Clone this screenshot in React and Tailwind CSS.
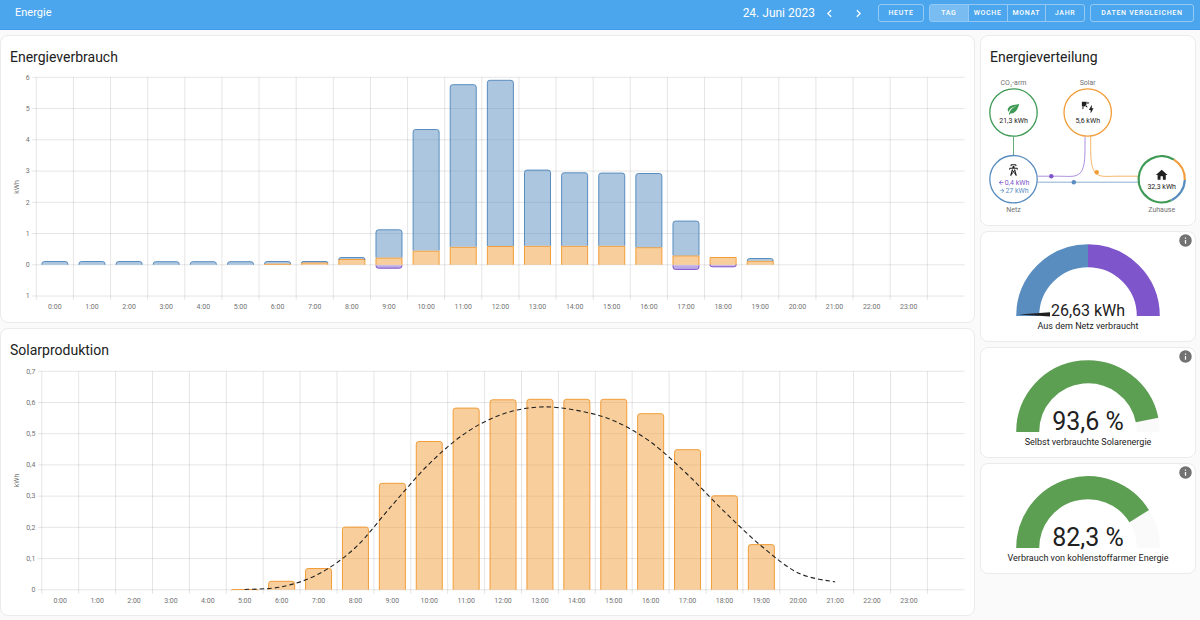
import React from "react";

const ICONS = {
  leaf: "M17,8C8,10 5.9,16.17 3.82,21.34L5.71,22L6.66,19.7C7.14,19.87 7.64,20 8,20C19,20 22,3 22,3C21,5 14,5.25 9,6.25C4,7.25 2,11.5 2,13.5C2,15.5 3.75,17.25 3.75,17.25C7,8 17,8 17,8Z",
  home: "M10,20V14H14V20H19V12H22L12,3L2,12H5V20H10Z",
  tower:
    "M8.28,5.45L6.5,4.55L7.76,2H16.23L17.5,4.55L15.72,5.44L15,4H9L8.28,5.45M18.62,8H14.09L13.3,5H10.7L9.91,8H5.38L4.1,10.55L5.89,11.44L6.62,10H17.38L18.1,11.45L19.89,10.56L18.62,8M17.77,22H15.7L15.46,21.1L12,15.9L8.53,21.1L8.3,22H6.23L9.12,11H11.19L10.83,12.35L12,14.1L13.16,12.35L12.81,11H14.88L17.77,22M11.4,15L10.5,13.65L9.32,18.13L11.4,15M14.68,18.12L13.5,13.64L12.6,15L14.68,18.12Z",
  solar:
    "M11.45,2V5.55L15,3.77L11.45,2M10.45,8L8,10.46L11.75,11.71L10.45,8M2,11.45L3.77,15L5.55,11.45H2M10,2H2V10C2.57,10.17 3.17,10.25 3.77,10.25C7.35,10.26 10.26,7.35 10.27,3.75C10.26,3.16 10.17,2.57 10,2M17,22V16H14L19,7V13H22L17,22Z",
  info: "M13,9H11V7H13M13,17H11V11H13M12,2A10,10 0 0,0 2,12A10,10 0 0,0 12,22A10,10 0 0,0 22,12A10,10 0 0,0 12,2Z",
  left: "M15.41,16.58L10.83,12L15.41,7.41L14,6L8,12L14,18L15.41,16.58Z",
  right: "M8.59,16.58L13.17,12L8.59,7.41L10,6L16,12L10,18L8.59,16.58Z",
  arrowLeft: "M20,11V13H8L13.5,18.5L12.08,19.92L4.16,12L12.08,4.08L13.5,5.5L8,11H20Z",
  arrowRight: "M4,11V13H16L10.5,18.5L11.92,19.92L19.84,12L11.92,4.08L10.5,5.5L16,11H4Z",
};

const BLUE = "#5a8dbf";
const ORANGE = "#f29d39";
const PURPLE = "#7e55cb";
const GREEN = "#3f9a56";

const HOURS = Array.from({ length: 24 }, (_, h) => h);

function Card({ children, className = "" }) {
  return (
    <section className={`relative rounded-lg border border-[#ebebeb] bg-white ${className}`}>
      {children}
    </section>
  );
}

function CardTitle({ children }) {
  return <h2 className="px-[9px] pt-[11px] pb-px text-sm leading-5 text-[#212121]">{children}</h2>;
}

function Grid({ x0, step, right, yTop, yBottom, rows, labelX }) {
  return (
    <g>
      <g stroke="#000" strokeOpacity="0.1" strokeWidth="1">
        {Array.from({ length: 25 }, (_, i) => (
          <line key={i} x1={x0 + i * step} x2={x0 + i * step} y1={yTop} y2={yBottom + 4} />
        ))}
        {rows.map((r) => (
          <line key={r.y} x1={x0 - 4} x2={right} y1={r.y} y2={r.y} />
        ))}
      </g>
      <g className="fill-[#727272] text-[7px]">
        {rows.map((r) => (
          <text key={r.y} x={labelX} y={r.y + 2.3} textAnchor="end">
            {r.label}
          </text>
        ))}
        {HOURS.map((h) => (
          <text key={h} x={x0 + (h + 0.5) * step} y={yBottom + 13} textAnchor="middle">
            {h}:00
          </text>
        ))}
      </g>
    </g>
  );
}

// Bar outline that leaves its base open, with the far corners rounded.
function Bar({ x, w = 26, base, end, color, round = true }) {
  const dir = end < base ? 1 : -1;
  const r = round ? Math.min(2.5, Math.abs(base - end)) : 0;
  const e = end + dir * 0.5;
  const d = `M${x},${base}V${e + dir * r}Q${x},${e} ${x + r},${e}H${x + w - r}Q${x + w},${e} ${x + w},${e + dir * r}V${base}`;
  return <path d={d} fill={color} fillOpacity="0.5" stroke={color} strokeWidth="1" />;
}

// [top of the stack, top of the solar share, bottom of the exported share]
const USAGE = [
  [261], [261], [261], [261.2], [261.2], [261.2],
  [261, 263.6], [261, 262.4], [257, 259], [229.3, 257.5, 268.2],
  [129, 250.6], [84.2, 246.8], [79.8, 246], [169.6, 245.8], [172.3, 245.8],
  [172.6, 245.8], [173, 247.2], [220.6, 255.4, 269.4], [257, 257, 266.8], [258, 260.8],
];

function UsageChart() {
  const x0 = 36.3;
  const step = 37.125;
  const zero = 264.8;
  const rows = [6, 5, 4, 3, 2, 1, 0, -1].map((v) => ({ y: zero - v * 31.25, label: String(Math.abs(v)) }));
  return (
    <svg viewBox="1 68 973 254" className="block w-full" role="img" aria-label="Energieverbrauch pro Stunde">
      <Grid x0={x0} step={step} right={964.5} yTop={77.3} yBottom={296.1} rows={rows} labelX={29.6} />
      <text className="fill-[#727272] text-[7px]" textAnchor="middle" transform="translate(18.5 187) rotate(-90)">
        kWh
      </text>
      {USAGE.map(([top, solar, out], i) => {
        const x = x0 + (i + 0.5) * step - 13;
        const mid = solar ?? zero;
        return (
          <g key={i}>
            {solar && <Bar x={x} base={zero} end={solar} color={ORANGE} round={false} />}
            {top < mid && <Bar x={x} base={mid} end={top} color={BLUE} />}
            {out && <Bar x={x} base={zero + 0.5} end={out + 0.5} color={PURPLE} />}
          </g>
        );
      })}
    </svg>
  );
}

const SOLAR_TOPS = [
  [5, 589], [6, 580.8], [7, 568], [8, 526.6], [9, 482.8], [10, 441], [11, 407.6], [12, 399.3],
  [13, 398.8], [14, 398.8], [15, 398.8], [16, 413.2], [17, 449.2], [18, 495.3], [19, 544.1],
];
const FORECAST = [
  589.5, 586.8, 574, 547.5, 505, 463.8, 432.6, 414, 407, 410.4, 420.7, 442, 474.5, 511.7, 546, 573, 582,
];

function SolarChart() {
  const x0 = 41.8;
  const step = 36.9;
  const zero = 589.8;
  const rows = [7, 6, 5, 4, 3, 2, 1, 0].map((v) => ({ y: zero - v * 31.22, label: v ? `0,${v}` : "0" }));
  const pts = FORECAST.map((y, i) => [x0 + (i + 5.5) * step, y]);
  let curve = `M${pts[0]}`;
  for (let i = 0; i < pts.length - 1; i++) {
    const a = pts[Math.max(0, i - 1)];
    const b = pts[i];
    const c = pts[i + 1];
    const d = pts[Math.min(pts.length - 1, i + 2)];
    curve += `C${b[0] + (c[0] - a[0]) / 6},${b[1] + (c[1] - a[1]) / 6} ${c[0] - (d[0] - b[0]) / 6},${c[1] - (d[1] - b[1]) / 6} ${c}`;
  }
  return (
    <svg viewBox="1 361 973 254" className="block w-full" role="img" aria-label="Solarproduktion pro Stunde">
      <Grid x0={x0} step={step} right={964.5} yTop={371.3} yBottom={589.8} rows={rows} labelX={35.4} />
      <text className="fill-[#727272] text-[7px]" textAnchor="middle" transform="translate(18.5 480.5) rotate(-90)">
        kWh
      </text>
      {SOLAR_TOPS.map(([h, top]) => (
        <Bar key={h} x={x0 + (h + 0.5) * step - 13} base={zero} end={top} color={ORANGE} />
      ))}
      <path d={curve} fill="none" stroke="#212121" strokeWidth="1.1" strokeDasharray="4.5 3" />
    </svg>
  );
}

function NodeIcon({ d, cx, cy, size = 14, fill = "#212121" }) {
  return <path d={d} fill={fill} transform={`translate(${cx - size / 2} ${cy - size / 2}) scale(${size / 24})`} />;
}

function polar(cx, cy, r, deg) {
  const a = (deg * Math.PI) / 180;
  return [cx + r * Math.sin(a), cy - r * Math.cos(a)];
}

function arc(cx, cy, r, from, to) {
  const large = to - from > 180 ? 1 : 0;
  return `M${polar(cx, cy, r, from)}A${r},${r} 0 ${large} 1 ${polar(cx, cy, r, to)}`;
}

function Distribution() {
  return (
    <svg viewBox="981 68 214 157" className="block w-full" role="img" aria-label="Energieverteilung">
      <g fill="none" strokeWidth="1">
        <path d="M1013.5,136.5V155.5" stroke={GREEN} strokeOpacity="0.8" />
        <path d="M1085,136.5v13.2c0,30.7 -8.8,26.5 -26.3,26.5H1037.5" stroke={PURPLE} strokeOpacity="0.65" />
        <path d="M1090.7,136.5v13.2c0,30.7 8.8,26.5 26.3,26.5H1138" stroke={ORANGE} strokeOpacity="0.75" />
        <path d="M1037.5,182.2H1138" stroke={BLUE} strokeOpacity="0.7" />
      </g>
      <circle cx="1051.3" cy="176.2" r="2.2" fill={PURPLE} />
      <circle cx="1096.7" cy="172.2" r="2.2" fill={ORANGE} />
      <circle cx="1073.8" cy="182.2" r="2.2" fill={BLUE} />

      <g fill="#fff" strokeWidth="1.3">
        <circle cx="1013.5" cy="112.5" r="23.7" stroke={GREEN} />
        <circle cx="1087.7" cy="112.5" r="23.7" stroke={ORANGE} />
        <circle cx="1013.5" cy="179.2" r="23.7" stroke={BLUE} />
      </g>
      <g fill="none" strokeWidth="2.2">
        <path d={arc(1161.7, 179.2, 23.1, 155, 392)} stroke={GREEN} />
        <path d={arc(1161.7, 179.2, 23.1, 32, 92)} stroke={ORANGE} />
        <path d={arc(1161.7, 179.2, 23.1, 92, 155)} stroke={BLUE} />
      </g>

      <NodeIcon d={ICONS.leaf} cx={1013.5} cy={108.8} fill={GREEN} />
      <NodeIcon d={ICONS.solar} cx={1087.7} cy={107.7} />
      <NodeIcon d={ICONS.tower} cx={1013.5} cy={170} />
      <NodeIcon d={ICONS.home} cx={1161.7} cy={175} />
      <NodeIcon d={ICONS.arrowLeft} cx={1001.2} cy={182.6} size={7} fill={PURPLE} />
      <NodeIcon d={ICONS.arrowRight} cx={1002} cy={190.8} size={7} fill={BLUE} />

      <g className="text-[7px]" textAnchor="middle">
        <g className="fill-[#727272]">
          <text x="1013.5" y="84.8">
            CO<tspan className="text-[4px]" dy="2">2</tspan><tspan dy="-2">-arm</tspan>
          </text>
          <text x="1087.7" y="84.8">Solar</text>
          <text x="1013.5" y="211.8">Netz</text>
          <text x="1161.7" y="211.8">Zuhause</text>
        </g>
        <g className="fill-[#212121]">
          <text x="1013.5" y="122.8">21,3 kWh</text>
          <text x="1087.7" y="122.8">5,6 kWh</text>
          <text x="1161.7" y="189.2">32,3 kWh</text>
        </g>
        <text x="1017" y="185" fill={PURPLE}>0,4 kWh</text>
        <text x="1017" y="193.4" fill={BLUE}>27 kWh</text>
      </g>
    </svg>
  );
}

function Gauge({ value, label, percent }) {
  return (
    <Card className="flex flex-col items-center pt-3 pb-2">
      <button type="button" aria-label="Information" className="absolute top-px right-0.5">
        <svg viewBox="0 0 24 24" className="block size-[15px] fill-[#727272]">
          <path d={ICONS.info} />
        </svg>
      </button>
      <svg viewBox="0 0 144 80" className="block w-36" role="img" aria-label={label}>
        <g fill="none" strokeWidth="23">
          {percent === undefined ? (
            <>
              <path d={arc(72, 72, 60.3, -90, 0)} stroke={BLUE} />
              <path d={arc(72, 72, 60.3, 0, 90)} stroke={PURPLE} />
            </>
          ) : (
            <>
              <path d={arc(72, 72, 60.3, -90, 90)} stroke="#fafafa" />
              <path d={arc(72, 72, 60.3, -90, -90 + percent * 1.8)} stroke="#5c9e52" />
            </>
          )}
        </g>
        {percent === undefined && <path d="M3,70.5L34,68.3V72.6Z" fill="#212121" />}
        <text
          x="72"
          y={percent === undefined ? 72 : 70}
          textAnchor="middle"
          className={percent === undefined ? "fill-[#212121] text-[16px]" : "fill-[#212121] text-[25px]"}
        >
          {value}
        </text>
      </svg>
      <p className="-mt-1 text-center text-[9px] leading-[13px] whitespace-nowrap text-[#212121]">{label}</p>
    </Card>
  );
}

function PeriodButton({ active, children }) {
  return (
    <button
      type="button"
      aria-pressed={active}
      className={`flex-1 basis-0 border-l border-white/40 text-center first:border-l-0 ${active ? "bg-white/25" : ""}`}
    >
      {children}
    </button>
  );
}

export default function App() {
  return (
    <div className="min-h-screen bg-[#fafafa] font-['Roboto','Liberation_Sans',sans-serif] text-[#212121]">
      <header className="flex h-[30px] items-center border-b border-[#3f9be8] bg-[#4ba6ed] pr-[6px] pb-[3px] pl-[15px] text-white">
        <h1 className="text-[11px] leading-4">Energie</h1>
        <div className="ml-auto flex items-center">
          <span className="text-xs leading-4">24. Juni 2023</span>
          <button type="button" aria-label="Zurück" className="ml-[7px]">
            <svg viewBox="0 0 24 24" className="block size-[15px] fill-white">
              <path d={ICONS.left} />
            </svg>
          </button>
          <button type="button" aria-label="Weiter" className="ml-[14px]">
            <svg viewBox="0 0 24 24" className="block size-[15px] fill-white">
              <path d={ICONS.right} />
            </svg>
          </button>
        </div>
        <div className="ml-3 flex h-[18px] items-stretch gap-[5px] text-[7px] leading-4 font-medium tracking-widest">
          <button type="button" className="w-[46px] rounded-[3px] border border-white/40">
            HEUTE
          </button>
          <div className="flex w-[156px] overflow-hidden rounded-[3px] border border-white/40">
            <PeriodButton active>TAG</PeriodButton>
            <PeriodButton>WOCHE</PeriodButton>
            <PeriodButton>MONAT</PeriodButton>
            <PeriodButton>JAHR</PeriodButton>
          </div>
          <button type="button" className="w-[104px] rounded-[3px] border border-white/40">
            DATEN VERGLEICHEN
          </button>
        </div>
      </header>

      <main className="flex items-start gap-[5px] pt-[5px] pr-1">
        <div className="flex min-w-0 flex-1 flex-col gap-[5px]">
          <Card>
            <CardTitle>Energieverbrauch</CardTitle>
            <UsageChart />
          </Card>
          <Card>
            <CardTitle>Solarproduktion</CardTitle>
            <SolarChart />
          </Card>
        </div>
        <aside className="flex w-[216px] shrink-0 flex-col gap-[5px]">
          <Card>
            <CardTitle>Energieverteilung</CardTitle>
            <Distribution />
          </Card>
          <Gauge value="26,63 kWh" label="Aus dem Netz verbraucht" />
          <Gauge value="93,6 %" label="Selbst verbrauchte Solarenergie" percent={93.6} />
          <Gauge value="82,3 %" label="Verbrauch von kohlenstoffarmer Energie" percent={82.3} />
        </aside>
      </main>
    </div>
  );
}
